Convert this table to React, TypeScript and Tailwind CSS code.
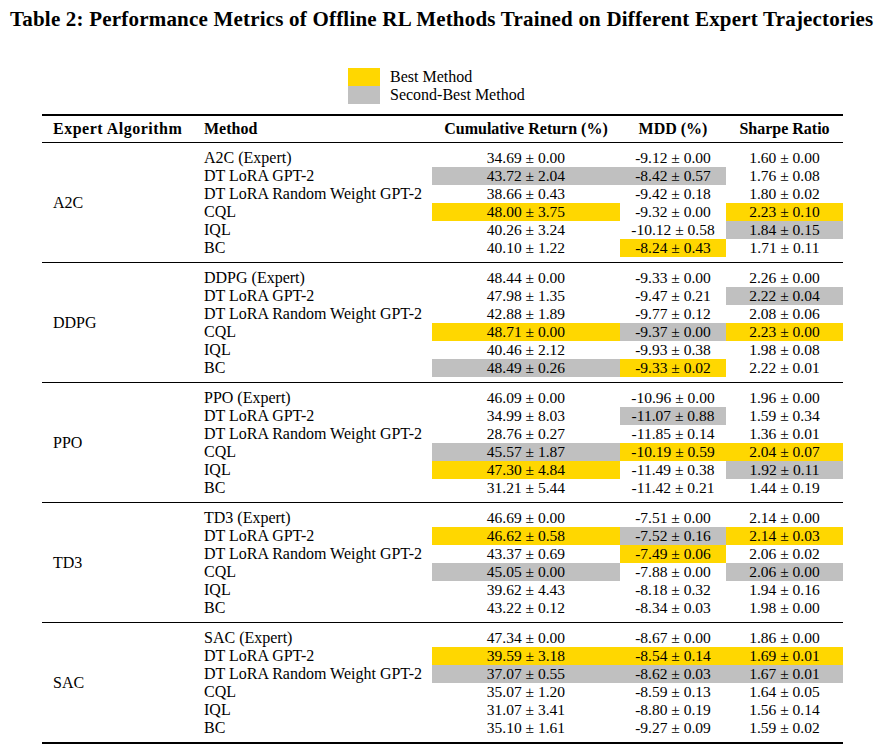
type Mark = "" | "y" | "g";
type Row = { m: string; c: [string, Mark]; d: [string, Mark]; s: [string, Mark] };
type Group = { name: string; rows: Row[] };

const r = (m: string, c: string, cm: Mark, d: string, dm: Mark, s: string, sm: Mark): Row => ({
  m,
  c: [c, cm],
  d: [d, dm],
  s: [s, sm],
});

const groups: Group[] = [
  {
    name: "A2C",
    rows: [
      r("A2C (Expert)", "34.69 ± 0.00", "", "-9.12 ± 0.00", "", "1.60 ± 0.00", ""),
      r("DT LoRA GPT-2", "43.72 ± 2.04", "g", "-8.42 ± 0.57", "g", "1.76 ± 0.08", ""),
      r("DT LoRA Random Weight GPT-2", "38.66 ± 0.43", "", "-9.42 ± 0.18", "", "1.80 ± 0.02", ""),
      r("CQL", "48.00 ± 3.75", "y", "-9.32 ± 0.00", "", "2.23 ± 0.10", "y"),
      r("IQL", "40.26 ± 3.24", "", "-10.12 ± 0.58", "", "1.84 ± 0.15", "g"),
      r("BC", "40.10 ± 1.22", "", "-8.24 ± 0.43", "y", "1.71 ± 0.11", ""),
    ],
  },
  {
    name: "DDPG",
    rows: [
      r("DDPG (Expert)", "48.44 ± 0.00", "", "-9.33 ± 0.00", "", "2.26 ± 0.00", ""),
      r("DT LoRA GPT-2", "47.98 ± 1.35", "", "-9.47 ± 0.21", "", "2.22 ± 0.04", "g"),
      r("DT LoRA Random Weight GPT-2", "42.88 ± 1.89", "", "-9.77 ± 0.12", "", "2.08 ± 0.06", ""),
      r("CQL", "48.71 ± 0.00", "y", "-9.37 ± 0.00", "g", "2.23 ± 0.00", "y"),
      r("IQL", "40.46 ± 2.12", "", "-9.93 ± 0.38", "", "1.98 ± 0.08", ""),
      r("BC", "48.49 ± 0.26", "g", "-9.33 ± 0.02", "y", "2.22 ± 0.01", ""),
    ],
  },
  {
    name: "PPO",
    rows: [
      r("PPO (Expert)", "46.09 ± 0.00", "", "-10.96 ± 0.00", "", "1.96 ± 0.00", ""),
      r("DT LoRA GPT-2", "34.99 ± 8.03", "", "-11.07 ± 0.88", "g", "1.59 ± 0.34", ""),
      r("DT LoRA Random Weight GPT-2", "28.76 ± 0.27", "", "-11.85 ± 0.14", "", "1.36 ± 0.01", ""),
      r("CQL", "45.57 ± 1.87", "g", "-10.19 ± 0.59", "y", "2.04 ± 0.07", "y"),
      r("IQL", "47.30 ± 4.84", "y", "-11.49 ± 0.38", "", "1.92 ± 0.11", "g"),
      r("BC", "31.21 ± 5.44", "", "-11.42 ± 0.21", "", "1.44 ± 0.19", ""),
    ],
  },
  {
    name: "TD3",
    rows: [
      r("TD3 (Expert)", "46.69 ± 0.00", "", "-7.51 ± 0.00", "", "2.14 ± 0.00", ""),
      r("DT LoRA GPT-2", "46.62 ± 0.58", "y", "-7.52 ± 0.16", "g", "2.14 ± 0.03", "y"),
      r("DT LoRA Random Weight GPT-2", "43.37 ± 0.69", "", "-7.49 ± 0.06", "y", "2.06 ± 0.02", ""),
      r("CQL", "45.05 ± 0.00", "g", "-7.88 ± 0.00", "", "2.06 ± 0.00", "g"),
      r("IQL", "39.62 ± 4.43", "", "-8.18 ± 0.32", "", "1.94 ± 0.16", ""),
      r("BC", "43.22 ± 0.12", "", "-8.34 ± 0.03", "", "1.98 ± 0.00", ""),
    ],
  },
  {
    name: "SAC",
    rows: [
      r("SAC (Expert)", "47.34 ± 0.00", "", "-8.67 ± 0.00", "", "1.86 ± 0.00", ""),
      r("DT LoRA GPT-2", "39.59 ± 3.18", "y", "-8.54 ± 0.14", "y", "1.69 ± 0.01", "y"),
      r("DT LoRA Random Weight GPT-2", "37.07 ± 0.55", "g", "-8.62 ± 0.03", "g", "1.67 ± 0.01", "g"),
      r("CQL", "35.07 ± 1.20", "", "-8.59 ± 0.13", "", "1.64 ± 0.05", ""),
      r("IQL", "31.07 ± 3.41", "", "-8.80 ± 0.19", "", "1.56 ± 0.14", ""),
      r("BC", "35.10 ± 1.61", "", "-9.27 ± 0.09", "", "1.59 ± 0.02", ""),
    ],
  },
];

function Cell({ v, w }: { v: [string, Mark]; w: string }) {
  const bg = v[1] === "y" ? "bg-[#ffd700]" : v[1] === "g" ? "bg-[#c0c0c0]" : "";
  return <div className={`${w} ${bg} h-[18px] flex items-center justify-center`}>{v[0]}</div>;
}

export default function App() {
  return (
    <div
      className="w-[882px] h-[754px] bg-white text-black overflow-hidden"
      style={{ fontFamily: '"Liberation Serif", "Times New Roman", serif' }}
    >
      <h1 className="pt-[5px] pl-[10px] text-[21px] leading-[28px] font-bold whitespace-nowrap tracking-[0.2px]">
        Table 2: Performance Metrics of Offline RL Methods Trained on Different Expert Trajectories
      </h1>

      <div className="mt-[35px] ml-[348px] text-[16px] leading-[18px]">
        <div className="flex items-center">
          <div className="w-[32px] h-[18px] bg-[#ffd700]" />
          <span className="ml-[10px]">Best Method</span>
        </div>
        <div className="flex items-center">
          <div className="w-[32px] h-[18px] bg-[#c0c0c0]" />
          <span className="ml-[10px]">Second-Best Method</span>
        </div>
      </div>

      <div className="mt-[10px] ml-[42px] w-[801px] text-[15.5px]">
        <div className="border-t-2 border-b border-black h-[29px] flex items-center font-bold text-[16px]">
          <div className="w-[153px] pl-[11px] tracking-[0.5px]">Expert Algorithm</div>
          <div className="w-[237px] pl-[9px]">Method</div>
          <div className="w-[188px] text-center">Cumulative Return (%)</div>
          <div className="w-[106px] text-center">MDD (%)</div>
          <div className="w-[117px] text-center">Sharpe Ratio</div>
        </div>

        {groups.map((g, gi) => (
          <div
            key={g.name}
            className={`flex border-black ${gi === groups.length - 1 ? "border-b-2 h-[121px]" : "border-b h-[120px]"}`}
          >
            <div className="w-[153px] pl-[11px] flex items-center text-[16px]">{g.name}</div>
            <div className="pt-[6px]">
              {g.rows.map((row, i) => (
                <div key={i} className="flex leading-[18px]">
                  <div className="w-[237px] pl-[9px] h-[18px] flex items-center text-[16px]">{row.m}</div>
                  <Cell v={row.c} w="w-[188px]" />
                  <Cell v={row.d} w="w-[106px]" />
                  <Cell v={row.s} w="w-[117px]" />
                </div>
              ))}
            </div>
          </div>
        ))}
      </div>
    </div>
  );
}
